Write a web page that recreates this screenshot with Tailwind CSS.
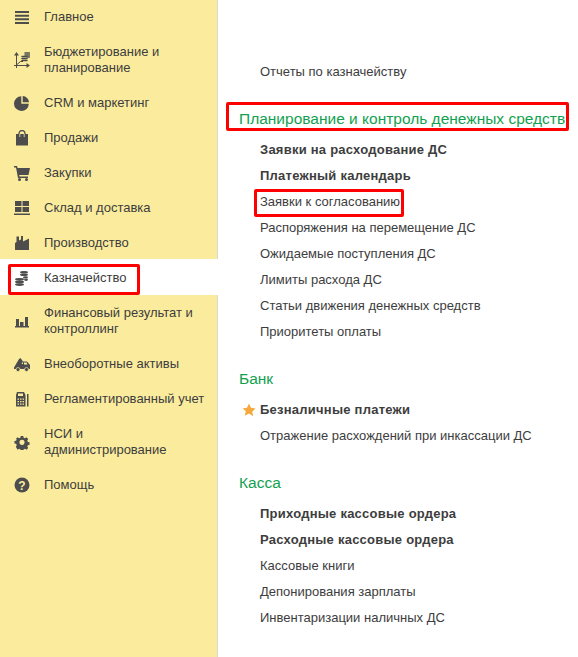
<!DOCTYPE html>
<html lang="ru">
<head>
    <meta charset="UTF-8">
    <title>Казначейство</title>
    <script src="https://cdn.jsdelivr.net/npm/@tailwindcss/browser@4"></script>
</head>
<body class="bg-white font-['Liberation_Sans',Arial,sans-serif] text-[13px] leading-4 text-[#3d3d3d] overflow-hidden">
<div class="flex h-[657px] w-[578px]">
    <!-- sidebar -->
    <nav class="w-[218px] h-full bg-[#fbec9d] border-r border-[#d8d8d8] shrink-0">
        <div class="flex items-center pl-[14px] pr-2 pt-[9px] pb-[10px]">
            <svg class="w-4 h-4 mr-[14px] shrink-0" viewBox="0 0 16 16" fill="#4d4d4d"><path d="M1 2h14v2H1zM1 5.700h14v2H1zM1 9.300h14v2H1zM1 13h14v2H1z"/></svg>
            <span>Главное</span>
        </div>
        <div class="flex items-center pl-[14px] pr-2 pt-[9px] pb-[10px]">
            <svg class="w-4 h-4 mr-[14px] shrink-0" viewBox="0 0 16 16" fill="none" stroke="#4d4d4d"><path d="M2.500 1.500V16M0 13.500h14M3 12.500l3.500-3H9"/><path d="M2.500 0L5 3.500H0zM16 13.500l-3.500-2.500v5z" fill="#4d4d4d" stroke="none"/><path d="M8 4.500h5M8 6.500h5M8 8.500h5" stroke-width="1.500" stroke-linecap="round"/><path d="M11 1h4.500M11 3h4.500M13.500 5h2" stroke-width="1.500" stroke-linecap="round"/></svg>
            <span>Бюджетирование и<br>планирование</span>
        </div>
        <div class="flex items-center pl-[14px] pr-2 pt-[9px] pb-[10px]">
            <svg class="w-4 h-4 mr-[14px] shrink-0" viewBox="0 0 16 16" fill="#4d4d4d"><path d="M7.300 1.200V8.700H14.800A7.400 7.400 0 1 1 7.300 1.200z"/><path d="M8.700 1A6.500 6.500 0 0 1 15 7.300H8.700z"/></svg>
            <span>CRM и маркетинг</span>
        </div>
        <div class="flex items-center pl-[14px] pr-2 pt-[9px] pb-[10px]">
            <svg class="w-4 h-4 mr-[14px] shrink-0" viewBox="0 0 16 16"><path d="M2 4h12v11.500H2z" fill="#4d4d4d"/><path d="M5 7V3.500a3 3 0 0 1 6 0V7" fill="none" stroke="#4d4d4d" stroke-width="1.300"/><path d="M5.800 4v3M10.200 4v3" stroke="#fbec9d" stroke-width=".8"/></svg>
            <span>Продажи</span>
        </div>
        <div class="flex items-center pl-[14px] pr-2 pt-[9px] pb-[10px]">
            <svg class="w-4 h-4 mr-[14px] shrink-0" viewBox="0 0 16 16" fill="#4d4d4d"><path d="M0 1h3l.6 2H16l-1.500 7H5.200l.3 1.500H14V13H4L2 2.500H0z"/><circle cx="5.500" cy="14.500" r="1.500"/><circle cx="12.500" cy="14.500" r="1.500"/></svg>
            <span>Закупки</span>
        </div>
        <div class="flex items-center pl-[14px] pr-2 pt-[9px] pb-[10px]">
            <svg class="w-4 h-4 mr-[14px] shrink-0" viewBox="0 0 16 16" fill="#4d4d4d"><path d="M1 1h6.500v5H1zM8.500 1H15v5H8.500zM1 7h6.500v5H1zM8.500 7H15v5H8.500zM0 13.500h16V15H0z"/></svg>
            <span>Склад и доставка</span>
        </div>
        <div class="flex items-center pl-[14px] pr-2 pt-[9px] pb-[10px]">
            <svg class="w-4 h-4 mr-[14px] shrink-0" viewBox="0 0 16 16" fill="#4d4d4d"><path d="M1 15V8L2.500 7V1.500H5V5.500L7 4.500V1H9V6.500L15 3.500V15z"/></svg>
            <span>Производство</span>
        </div>
        <div class="flex items-center pl-[14px] pr-2 pt-[11px] pb-[9px] bg-white -mr-px -mt-[2px] mb-px">
            <svg class="w-4 h-4 mr-[14px] shrink-0" viewBox="0 0 16 16" fill="#4d4d4d"><ellipse cx="10" cy="2.200" rx="4" ry="1.300"/><ellipse cx="10" cy="4.800" rx="4" ry="1.300"/><ellipse cx="11.500" cy="7.400" rx="2.500" ry="1.200"/><ellipse cx="12" cy="9.800" rx="2" ry="1.100"/><ellipse cx="5.500" cy="9.300" rx="4.500" ry="1.400"/><ellipse cx="5.500" cy="12" rx="4.500" ry="1.400"/><ellipse cx="5.500" cy="14.600" rx="4.500" ry="1.400"/></svg>
            <span>Казначейство</span>
        </div>
        <div class="flex items-center pl-[14px] pr-2 pt-[9px] pb-[10px]">
            <svg class="w-4 h-4 mr-[14px] shrink-0" viewBox="0 0 16 16" fill="#4d4d4d"><path d="M2 6h3v7H2zM6 9h3.500v4H6zM11 4h3v9h-3zM1 13h14v1.500H1z"/></svg>
            <span>Финансовый результат и<br>контроллинг</span>
        </div>
        <div class="flex items-center pl-[14px] pr-2 pt-[9px] pb-[10px]">
            <svg class="w-4 h-4 mr-[14px] shrink-0" viewBox="0 0 16 16" fill="#4d4d4d"><path d="M0 11.500L5 3l1.500-1L9 5.500 7.500 8H9V5.500h4L16 9v4H0z"/><path d="M10 6.500v2h3.500L12.500 6.500z" fill="#fbec9d"/><circle cx="4" cy="13.500" r="2" stroke="#fbec9d" stroke-width=".7"/><circle cx="12.500" cy="13.500" r="2" stroke="#fbec9d" stroke-width=".7"/></svg>
            <span>Внеоборотные активы</span>
        </div>
        <div class="flex items-center pl-[14px] pr-2 pt-[9px] pb-[10px]">
            <svg class="w-4 h-4 mr-[14px] shrink-0" viewBox="0 0 16 16" fill="#4d4d4d"><path fill-rule="evenodd" d="M3 1h7l1.500 3v11.500h-9.500V4zM4 2.500V5h5V2.500zM3.500 7.500v1.300H5V7.500zM6 7.500v1.300h1.500V7.500zM8.500 7.500v1.300H10V7.500zM3.500 10v1.300H5V10zM6 10v1.300h1.500V10zM8.500 10v1.300H10V10zM3.500 12.500v1.300H5v-1.300zM6 12.500v1.300h1.500v-1.300zM8.500 12.500v1.300H10v-1.300z"/><path d="M13 3h1.500v12.500H13z"/></svg>
            <span>Регламентированный учет</span>
        </div>
        <div class="flex items-center pl-[14px] pr-2 pt-[9px] pb-[10px]">
            <svg class="w-4 h-4 mr-[14px] shrink-0" viewBox="0 0 16 16" fill="#4d4d4d"><path fill-rule="evenodd" d="M6.500 1h3l.4 2 1.500.7 1.800-1.100 2.100 2.100-1.100 1.800.7 1.500 2 .4v3l-2 .4-.7 1.500 1.100 1.800-2.100 2.100-1.800-1.100-1.500.7-.4 2h-3l-.4-2-1.500-.7-1.800 1.100L.7 13.600l1.100-1.800-.7-1.500-2-.4v-3l2-.4.7-1.500L.7 4.700l2.100-2.100 1.800 1.100 1.500-.7zM8 5.500a3 3 0 1 0 0 6 3 3 0 0 0 0-6z" transform="translate(1.200 1.100) scale(.85)"/></svg>
            <span>НСИ и<br>администрирование</span>
        </div>
        <div class="flex items-center pl-[14px] pr-2 pt-[9px] pb-[10px]">
            <svg class="w-4 h-4 mr-[14px] shrink-0" viewBox="0 0 16 16"><circle cx="8" cy="8" r="7.500" fill="#4d4d4d"/><text x="8" y="12.500" text-anchor="middle" font-size="12" font-weight="700" fill="#fbec9d" font-family="Liberation Sans">?</text></svg>
            <span>Помощь</span>
        </div>
    </nav>

    <!-- commands -->
    <main class="flex-1 pl-[42px] pt-[59px]">
        <a class="block h-[26px] leading-[26px]">Отчеты по казначейству</a>

        <h2 class="-ml-[21px] mt-[21px] h-[26px] text-[15.5px] leading-[26px] text-[#12a150] whitespace-nowrap">Планирование и контроль денежных средств</h2>
        <ul class="mt-[5px] [&>li]:h-[26px] [&>li]:leading-[26px]">
            <li class="font-bold tracking-[0.24px]">Заявки на расходование ДС</li>
            <li class="font-bold tracking-[0.24px]">Платежный календарь</li>
            <li>Заявки к согласованию</li>
            <li>Распоряжения на перемещение ДС</li>
            <li>Ожидаемые поступления ДС</li>
            <li>Лимиты расхода ДС</li>
            <li>Статьи движения денежных средств</li>
            <li>Приоритеты оплаты</li>
        </ul>

        <h2 class="-ml-[21px] mt-[21px] h-[26px] text-[15.5px] leading-[26px] text-[#12a150]">Банк</h2>
        <ul class="mt-[5px] [&>li]:h-[26px] [&>li]:leading-[26px]">
            <li class="font-bold tracking-[0.24px] relative">
                <svg class="absolute -left-[18px] top-[6px] w-[14px] h-[14px]" viewBox="0 0 24 24" fill="#f5a83c"><path d="M12 1l3.400 7.300 7.900 1-5.800 5.500 1.500 7.900L12 17.900l-7 3.800 1.500-7.900L.7 9.300l7.900-1z"/></svg>
                Безналичные платежи
            </li>
            <li>Отражение расхождений при инкассации ДС</li>
        </ul>

        <h2 class="-ml-[21px] mt-[21px] h-[26px] text-[15.5px] leading-[26px] text-[#12a150]">Касса</h2>
        <ul class="mt-[5px] [&>li]:h-[26px] [&>li]:leading-[26px]">
            <li class="font-bold tracking-[0.24px]">Приходные кассовые ордера</li>
            <li class="font-bold tracking-[0.24px]">Расходные кассовые ордера</li>
            <li>Кассовые книги</li>
            <li>Депонирования зарплаты</li>
            <li>Инвентаризации наличных ДС</li>
        </ul>
    </main>
</div>

<!-- red annotation frames over the screenshot -->
<div class="absolute left-[8px] top-[264px] w-[132px] h-[31px] border-[3px] border-[#f00] rounded-[2px]"></div>
<div class="absolute left-[226px] top-[102px] w-[343px] h-[29px] border-[3px] border-[#f00] rounded-[2px]"></div>
<div class="absolute left-[254px] top-[189px] w-[150px] h-[28px] border-[3px] border-[#f00] rounded-[2px]"></div>
</body>
</html>
